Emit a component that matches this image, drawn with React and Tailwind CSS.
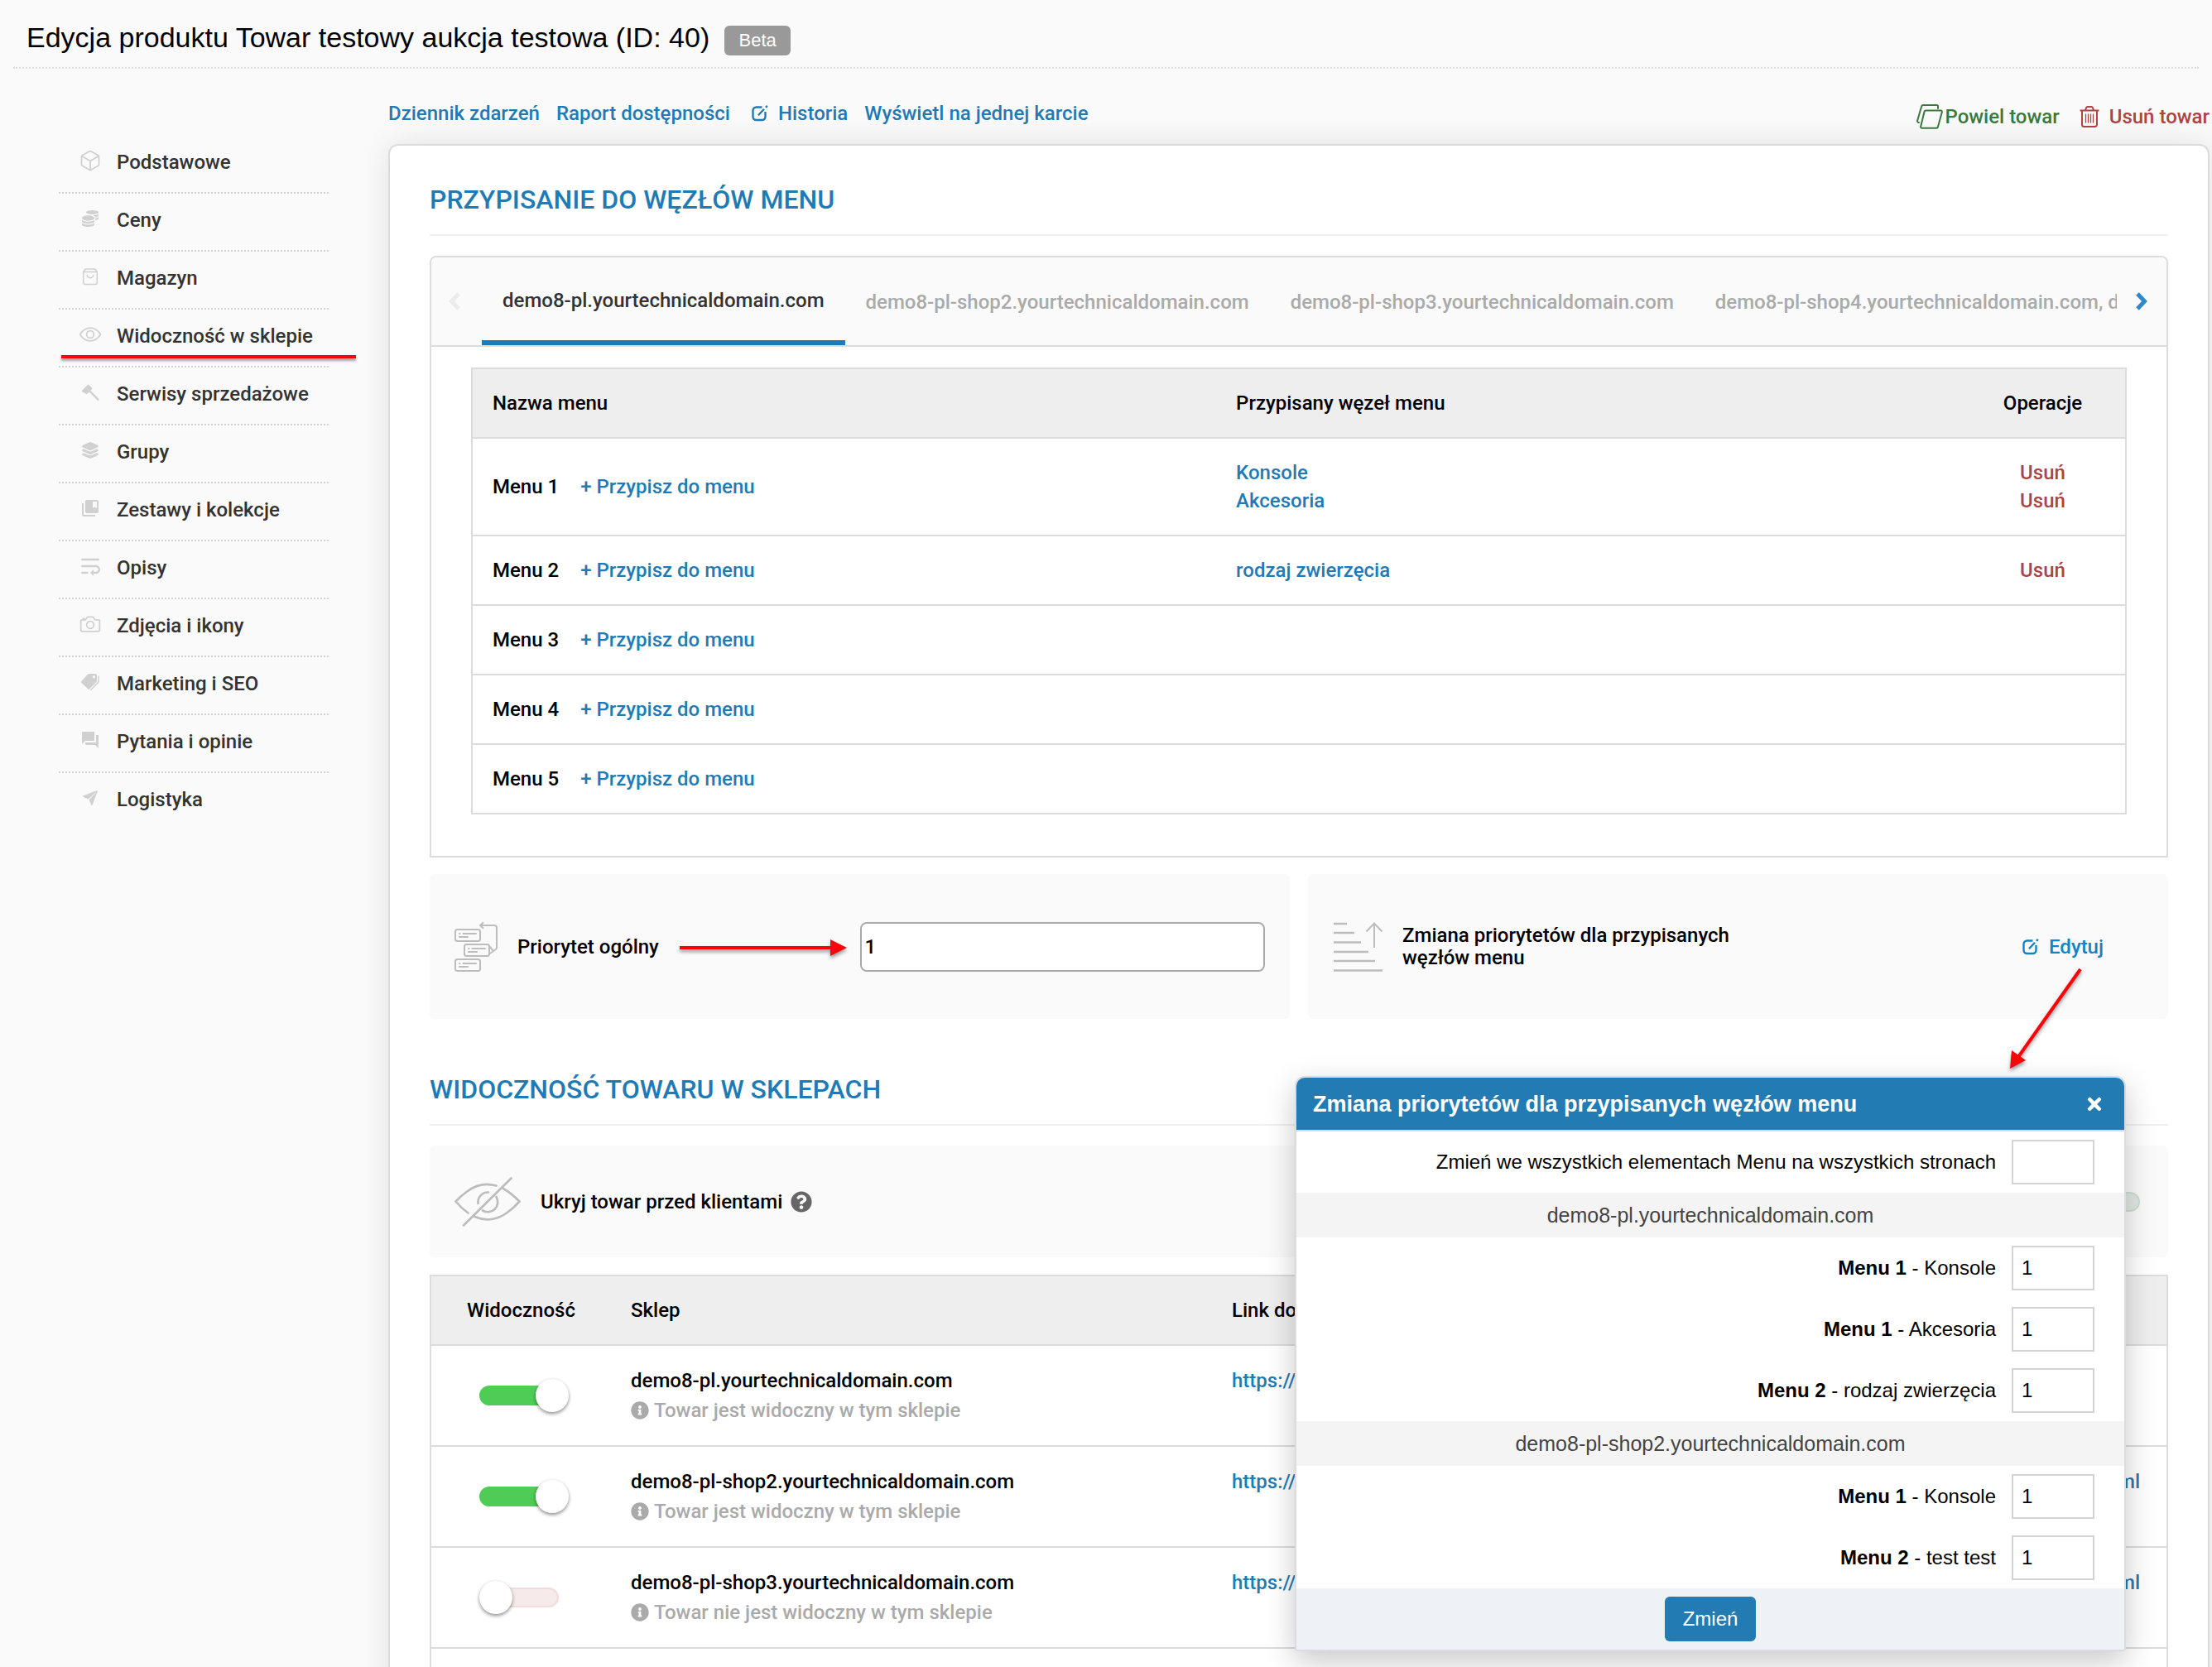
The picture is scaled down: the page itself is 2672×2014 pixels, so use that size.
// App.jsx
import React, { useState } from 'react';
import { FaCoins, FaInfoCircle, FaQuestionCircle, FaTimes } from 'react-icons/fa';
import { IoCubeOutline, IoEyeOutline, IoLayers, IoCameraOutline, IoPaperPlane } from 'react-icons/io5';
import { MdCollectionsBookmark, MdForum, MdWrapText } from 'react-icons/md';

// Icons that the packs do not have
const BagIcon = ({ className }) => (
  <svg viewBox="0 0 24 24" className={className} fill="none" stroke="currentColor" strokeWidth="1.5" strokeLinejoin="round" strokeLinecap="round">
    <path d="M3.7 6.5v13a2 2 0 0 0 2 2h12.6a2 2 0 0 0 2-2v-13L17.8 3H6.2L3.7 6.5zM3.7 6.5h16.6" />
    <path d="M8.2 10.5a3.8 3.2 0 0 0 7.6 0" />
  </svg>
);

const GavelIcon = ({ className }) => (
  <svg viewBox="0 0 24 24" className={className} fill="currentColor">
    <path d="M2.2 9.8 8.8 3a1.2 1.2 0 0 1 1.7 0l3.6 3.6a1 1 0 0 1 0 1.5l-1.7 1.6 9.8 10a1.2 1.2 0 0 1-1.7 1.8L10.6 11.5l-2.3 2.3a1 1 0 0 1-1.5 0L2.2 11.2a1 1 0 0 1 0-1.4z" />
  </svg>
);

const TagsIcon = ({ className }) => (
  <svg viewBox="-1 -2 24 24" className={className} fill="currentColor">
    <path
      fillRule="evenodd"
      d="M9.5 0H17a2 2 0 0 1 2 2v6.5a3 3 0 0 1-.8 1.8l-8 8a1.5 1.5 0 0 1-2.1 0L.5 11a1.5 1.5 0 0 1 0-2.1L7.800.7A3 3 0 0 1 9.500 0zM15.500 2a1.700 1.700 0 1 0 0 3.400 1.700 1.700 0 0 0 0-3.400z"
    />
    <path d="M21 3v6.200a2 2 0 0 1-.6 1.400l-8.600 8.700" fill="none" stroke="currentColor" strokeWidth="1.500" strokeLinecap="round" />
  </svg>
);

const EditIcon = ({ className }) => (
  <svg viewBox="0 0 20 20" className={className} fill="none" stroke="currentColor" strokeWidth="2.4">
    <path d="M12.5 2.5h-7a4 4 0 0 0-4 4V14a4 4 0 0 0 4 4h7a4 4 0 0 0 4-4V8" />
    <path d="m8 12.2 7-7.4M17 2.800 18.800.9" />
  </svg>
);

const CopyIcon = ({ className }) => (
  <svg viewBox="0 0 32 30" className={className} fill="none" stroke="currentColor" strokeWidth="2" strokeLinejoin="round" strokeLinecap="round">
    <path d="M26 5V3a1.500 1.500 0 0 0-1.500-2h-16A2.500 2.500 0 0 0 6 3L1.200 19.500A1.800 1.800 0 0 0 3 22" />
    <path d="M11.500 7.500h17.800a1.500 1.500 0 0 1 1.500 2L26 27a2 2 0 0 1-2 1.700H6.700a1.500 1.500 0 0 1-1.500-2L9.500 9a2 2 0 0 1 2-1.500z" />
  </svg>
);

const TrashIcon = ({ className }) => (
  <svg viewBox="0 0 24 26" className={className} fill="none" stroke="currentColor" strokeWidth="2">
    <path d="M.5 5.500h23M7 5l1-2.600A2 2 0 0 1 9.800 1h4.400A2 2 0 0 1 16 2.400L17 5" />
    <path d="M3 6v16.500A2.500 2.500 0 0 0 5.500 25h13a2.500 2.500 0 0 0 2.500-2.500V6" />
    <path d="M7.500 9.500v11M10.500 9.500v11M13.500 9.500v11M16.500 9.500v11" strokeWidth="1.3" />
  </svg>
);

const ChevronIcon = ({ className }) => (
  <svg viewBox="0 0 16 24" className={className} fill="none" stroke="currentColor" strokeWidth="5">
    <path d="m3 3 8.500 9L3 21" />
  </svg>
);

const PriorityIcon = ({ className }) => (
  <svg viewBox="0 0 52 60" className={className} fill="none" stroke="currentColor" strokeWidth="2" strokeLinecap="round">
    <rect x="1" y="9" width="30" height="14" rx="2.5" />
    <rect x="12" y="27" width="30" height="14" rx="2.5" />
    <rect x="1" y="45" width="30" height="14" rx="2.5" />
    <path d="M6 14h.5M10.500 14H26M6 18h10M17 32h.5M21.500 32H37M17 36h10M6 50h.5M10.500 50H26M6 54h10" />
    <path d="M31.500 4H48a3 3 0 0 1 3 3v23.500a3 3 0 0 1-1.200 2.500L42 38.500M34.500.8 31 4l3.500 3.300M42 29l5 6" />
  </svg>
);

const SortIcon = ({ className }) => (
  <svg viewBox="0 0 60 60" className={className} fill="none" stroke="currentColor" strokeWidth="2">
    <path d="M1 2h16M1 13h25M1 24.500h33M1 36h42M1 47h50M1 58.500h59" strokeWidth="2.5" />
    <path d="M50 31V1.500M40.500 11.500 50 1.500l9.500 10" />
  </svg>
);

const HiddenIcon = ({ className }) => (
  <svg viewBox="0 0 80 60" className={className} fill="none" stroke="currentColor" strokeWidth="2.7" strokeLinecap="round" strokeLinejoin="round">
    <path d="M11 58.500 68.500 1.500" />
    <path d="M50.500 10.500C36 6.500 25 10 14.500 18A89 89 0 0 0 1.500 29.500C6 35 11 39.500 16.500 43.500" />
    <path d="M59 14C66 18 73 24 78.500 29.500A85 85 0 0 1 63 43.500C52 51.500 38 54 24.500 48" />
    <path d="M41 18.500A12 12 0 0 0 28.500 32M50.500 24A12 12 0 0 1 34 40.500" />
  </svg>
);

const sections = [
  { name: 'Podstawowe', icon: IoCubeOutline, size: 'size-7' },
  { name: 'Ceny', icon: FaCoins, size: 'size-5' },
  { name: 'Magazyn', icon: BagIcon, size: 'size-6' },
  { name: 'Widoczność w sklepie', icon: IoEyeOutline, size: 'size-7', marked: true },
  { name: 'Serwisy sprzedażowe', icon: GavelIcon, size: 'size-6' },
  { name: 'Grupy', icon: IoLayers, size: 'size-6' },
  { name: 'Zestawy i kolekcje', icon: MdCollectionsBookmark, size: 'size-6' },
  { name: 'Opisy', icon: MdWrapText, size: 'size-8' },
  { name: 'Zdjęcia i ikony', icon: IoCameraOutline, size: 'size-7' },
  { name: 'Marketing i SEO', icon: TagsIcon, size: 'size-6' },
  { name: 'Pytania i opinie', icon: MdForum, size: 'size-6' },
  { name: 'Logistyka', icon: IoPaperPlane, size: 'size-5' }
];

const tabs = [
  'demo8-pl.yourtechnicaldomain.com',
  'demo8-pl-shop2.yourtechnicaldomain.com',
  'demo8-pl-shop3.yourtechnicaldomain.com',
  'demo8-pl-shop4.yourtechnicaldomain.com, demo8-pl-shop5.yourtechnicaldomain.com'
];

const menus = [
  { name: 'Menu 1', nodes: ['Konsole', 'Akcesoria'] },
  { name: 'Menu 2', nodes: ['rodzaj zwierzęcia'] },
  { name: 'Menu 3', nodes: [] },
  { name: 'Menu 4', nodes: [] },
  { name: 'Menu 5', nodes: [] }
];

const shops = [
  { domain: 'demo8-pl.yourtechnicaldomain.com', visible: true },
  { domain: 'demo8-pl-shop2.yourtechnicaldomain.com', visible: true },
  { domain: 'demo8-pl-shop3.yourtechnicaldomain.com', visible: false }
];

const priorityGroups = [
  {
    shop: 'demo8-pl.yourtechnicaldomain.com',
    rows: [['Menu 1', 'Konsole'], ['Menu 1', 'Akcesoria'], ['Menu 2', 'rodzaj zwierzęcia']]
  },
  {
    shop: 'demo8-pl-shop2.yourtechnicaldomain.com',
    rows: [['Menu 1', 'Konsole'], ['Menu 2', 'test test']]
  }
];

function SectionTitle({ children }) {
  return (
    <h2 className="border-b-2 border-[#f0f0f0] pb-6 text-[32px] leading-9 font-medium text-[#1f7bb6] uppercase">
      {children}
    </h2>
  );
}

function Switch({ label, checked, onChange, offClass = 'border-[#f0dcdc] bg-[#f6eaea]' }) {
  return (
    <input
      type="checkbox"
      role="switch"
      aria-label={label}
      checked={checked}
      onChange={onChange}
      className={`relative block h-6 w-24 appearance-none rounded-full border-2 before:absolute before:-top-[10px] before:size-10 before:rounded-full before:bg-white before:shadow-[0_2px_4px_rgba(0,0,0,0.45)] ${
        checked ? 'border-[#4fcc55] bg-[#4fcc55] before:left-[66px]' : `${offClass} before:-left-[2px]`
      }`}
    />
  );
}

function Sidebar() {
  return (
    <nav className="w-[469px] shrink-0 pt-[81px] pr-[72px] pl-[71px]">
      <ul>
        {sections.map(({ name, icon: Icon, size, marked }) => (
          <li key={name} className="relative border-b-2 border-dotted border-[#d2d2d2] last:border-0">
            <a href="#" className="flex h-[68px] items-center pb-1 pl-[26px] font-medium text-[#333]">
              <span className="mr-5 -mt-1 flex w-6 justify-center text-[#d0d0d0]">
                <Icon className={`shrink-0 ${size}`} />
              </span>
              {name}
            </a>
            {marked && (
              <span className="absolute top-[55px] left-[3px] h-1 w-[356px] bg-[#ff0008] shadow-[0_3px_3px_rgba(0,0,0,0.35)]" />
            )}
          </li>
        ))}
      </ul>
    </nav>
  );
}

function MenuNodes() {
  const [active, setActive] = useState(0);

  return (
    <div className="mt-6 rounded-t-lg border-2 border-[#dcdcdc]">
      <div className="flex h-[108px] items-stretch rounded-t-md border-b-2 border-[#dcdcdc] bg-[#fafafa]">
        <button aria-label="Poprzednie" className="flex w-[61px] shrink-0 items-center pl-5 text-[#ececec]">
          <ChevronIcon className="h-6 w-4 rotate-180" />
        </button>
        <div role="tablist" className="flex min-w-0 flex-1 overflow-hidden">
          {tabs.map((tab, i) => (
            <button
              key={tab}
              role="tab"
              aria-selected={i === active}
              onClick={() => setActive(i)}
              className={`shrink-0 border-b-[6px] px-[25px] font-medium whitespace-nowrap ${
                i === active ? 'border-[#1f7bb6] pt-1 text-[#333]' : 'border-transparent pt-2 text-[#aaa]'
              }`}
            >
              {tab}
            </button>
          ))}
        </div>
        <button aria-label="Następne" className="flex w-[60px] shrink-0 items-center justify-center text-[#2f88c8]">
          <ChevronIcon className="h-6 w-4" />
        </button>
      </div>

      <div className="px-12 pt-[25px] pb-[50px]">
        <table className="w-full table-fixed border-2 border-[#dcdcdc] font-medium">
          <thead>
            <tr className="h-[84px] bg-[#eee] text-left">
              <th className="w-[45%] pl-6 font-medium">Nazwa menu</th>
              <th className="pl-6 font-medium">Przypisany węzeł menu</th>
              <th className="w-[200px] text-center font-medium">Operacje</th>
            </tr>
          </thead>
          <tbody>
            {menus.map(menu => (
              <tr key={menu.name} className="h-[84px] border-t-2 border-[#dcdcdc]">
                <td className="pl-6">
                  {menu.name}
                  <a href="#" className="ml-[26px] text-[#1f7bb6]">+ Przypisz do menu</a>
                </td>
                <td className={menu.nodes.length > 1 ? 'py-6 pl-6' : 'pl-6'}>
                  {menu.nodes.map(node => (
                    <a key={node} href="#" className="block leading-[34px] text-[#1f7bb6]">{node}</a>
                  ))}
                </td>
                <td className="text-center">
                  {menu.nodes.map(node => (
                    <a key={node} href="#" className="block leading-[34px] text-[#ad4444]">Usuń</a>
                  ))}
                </td>
              </tr>
            ))}
          </tbody>
        </table>
      </div>
    </div>
  );
}

function PriorityPanels() {
  return (
    <div className="mt-5 grid grid-cols-2 gap-[22px] font-medium">
      <div className="grid h-[175px] grid-cols-2 items-center rounded-md bg-[#fafafa]">
        <div className="flex items-center pr-4 pl-[30px]">
          <PriorityIcon className="h-[60px] w-[52px] shrink-0 text-[#bdbdbd]" />
          <label htmlFor="priority" className="ml-6">Priorytet ogólny</label>
          <svg viewBox="0 0 202 24" className="ml-auto h-6 w-[202px] drop-shadow-[0_3px_2px_rgba(0,0,0,0.4)]" fill="#ff0008">
            <path d="M0 11h182V3l20 10-20 10v-8H0z" />
          </svg>
        </div>
        <div className="pr-[30px]">
          <input
            id="priority"
            defaultValue="1"
            className="block h-[60px] w-full rounded-lg border-2 border-[#aaa] bg-white px-1 font-medium"
          />
        </div>
      </div>

      <div className="relative flex h-[175px] items-center rounded-md bg-[#fafafa] pr-[78px] pl-[30px]">
        <SortIcon className="size-[60px] shrink-0 text-[#bdbdbd]" />
        <p className="ml-6 w-[420px] leading-[27px]">Zmiana priorytetów dla przypisanych węzłów menu</p>
        <a href="#" className="ml-auto flex items-center gap-3 text-[#1283c4]">
          <EditIcon className="size-5" />
          Edytuj
        </a>
        {/* Pointer from the edit link to the dialog */}
        <svg viewBox="0 0 90 126" className="absolute top-28 right-[103px] z-20 h-[126px] w-[90px] drop-shadow-[0_3px_2px_rgba(0,0,0,0.4)]">
          <path d="M87 3 12 109" stroke="#ff0008" strokeWidth="4" />
          <path d="M2 123 4 101 21 113z" fill="#ff0008" />
        </svg>
      </div>
    </div>
  );
}

function ShopVisibility() {
  const [hidden, setHidden] = useState(false);
  const [visible, setVisible] = useState(shops.map(shop => shop.visible));

  const toggleShop = (index) => {
    setVisible(prev => prev.map((value, i) => (i === index ? !value : value)));
  };

  return (
    <>
      <div className="mt-6 flex h-[135px] items-center rounded-md bg-[#fafafa] pr-[34px] pl-[30px] font-medium">
        <HiddenIcon className="h-[60px] w-20 text-[#bdbdbd]" />
        <span className="ml-6">Ukryj towar przed klientami</span>
        <FaQuestionCircle className="ml-[10px] size-[26px] text-[#666]" />
        <div className="ml-auto">
          <Switch
            label="Ukryj towar przed klientami"
            checked={hidden}
            onChange={() => setHidden(!hidden)}
            offClass="border-[#d0ddd2] bg-[#e0e7e2]"
          />
        </div>
      </div>

      <table className="mt-[21px] w-full table-fixed border-2 border-[#dcdcdc] font-medium">
        <thead>
          <tr className="h-[84px] bg-[#eee] text-left">
            <th className="w-[218px] text-center font-medium">Widoczność</th>
            <th className="w-[726px] pl-6 font-medium">Sklep</th>
            <th className="pl-6 font-medium">Link do karty towaru</th>
          </tr>
        </thead>
        <tbody>
          {shops.map((shop, i) => (
            <tr key={shop.domain} className="h-[122px] border-y-2 border-[#dcdcdc]">
              <td className="pl-[58px]">
                <Switch label={shop.domain} checked={visible[i]} onChange={() => toggleShop(i)} />
              </td>
              <td className="pl-6">
                <p className="leading-9">{shop.domain}</p>
                <p className="flex items-center gap-[6px] leading-9 text-[#aaa]">
                  <FaInfoCircle className="size-[22px]" />
                  {visible[i] ? 'Towar jest widoczny w tym sklepie' : 'Towar nie jest widoczny w tym sklepie'}
                </p>
              </td>
              <td className="pt-6 pl-6 align-top">
                <a href="#" className="block leading-9 whitespace-nowrap text-[#1f7bb6]">
                  https://{shop.domain}/product-pol-40-towar-testowy-aukcja-testowa.html
                </a>
              </td>
            </tr>
          ))}
          <tr className="h-[122px]">
            <td colSpan={3} />
          </tr>
        </tbody>
      </table>
    </>
  );
}

function PriorityField({ id, value, children }) {
  return (
    <div className="flex h-[74px] items-center justify-end gap-[19px] pr-9">
      <label htmlFor={id}>{children}</label>
      <input id={id} defaultValue={value} className="h-[54px] w-[100px] border-2 border-[#d4d4d4] bg-white px-[10px]" />
    </div>
  );
}

function PriorityDialog() {
  const [isOpen, setIsOpen] = useState(true);

  if (!isOpen) return null;

  return (
    <div
      role="dialog"
      aria-labelledby="dialog-title"
      className="absolute top-[1124px] right-[99px] z-10 w-[1004px] overflow-hidden rounded-t-xl rounded-b border-2 border-[#dcdce0] bg-white font-['Liberation_Sans',Arial,sans-serif] shadow-[0_12px_36px_rgba(0,0,0,0.22)]"
    >
      <div className="flex h-[65px] items-center justify-between border-b-2 border-[#dcdce0] bg-[#227bb3] pr-6 pl-5 text-white">
        <h3 id="dialog-title" className="text-[27px] font-bold">Zmiana priorytetów dla przypisanych węzłów menu</h3>
        <button aria-label="Zamknij" onClick={() => setIsOpen(false)}>
          <FaTimes className="size-6" />
        </button>
      </div>

      <PriorityField id="priority-all" value="">Zmień we wszystkich elementach Menu na wszystkich stronach</PriorityField>
      {priorityGroups.map(group => (
        <div key={group.shop}>
          <div className="flex h-[54px] items-center justify-center bg-[#f4f4f4] text-[25px] text-[#444]">{group.shop}</div>
          {group.rows.map(([menu, node]) => (
            <PriorityField key={menu + node} id={`${group.shop}-${menu}-${node}`} value="1">
              <b>{menu}</b> - {node}
            </PriorityField>
          ))}
        </div>
      ))}

      <div className="flex h-[74px] items-center justify-center bg-[#eef1f6]">
        <button className="h-[54px] w-[110px] rounded-md bg-[#227bb3] text-white">Zmień</button>
      </div>
    </div>
  );
}

export default function App() {
  return (
    <div className="h-screen overflow-hidden bg-[#fafafa] font-[Roboto,sans-serif] text-[24px] leading-8 text-black">
      <header className="mx-4 flex h-[83px] items-center border-b-2 border-dotted border-[#dcdcdc] px-4 pt-2 font-['Liberation_Sans',Arial,sans-serif]">
        <h1 className="text-[34px]">Edycja produktu Towar testowy aukcja testowa (ID: 40)</h1>
        <span className="mt-2 ml-[18px] flex h-9 w-20 items-center justify-center rounded-md bg-[#999] text-[22px] text-white">Beta</span>
      </header>

      <div className="flex">
        <Sidebar />

        <main className="min-w-0 flex-1 pr-[3px]">
          <div className="flex h-[91px] items-center gap-5 pt-4 font-medium text-[#1f7bb6]">
            <a href="#">Dziennik zdarzeń</a>
            <a href="#">Raport dostępności</a>
            <a href="#" className="ml-[6px] flex items-center gap-3">
              <EditIcon className="size-5" />
              Historia
            </a>
            <a href="#">Wyświetl na jednej karcie</a>
            <a href="#" className="mt-2 ml-auto flex items-center gap-[2px] text-[#3a7a3f]">
              <CopyIcon className="h-[30px] w-8" />
              Powiel towar
            </a>
            <a href="#" className="mt-2 ml-1 flex items-center gap-3 text-[#ad4444]">
              <TrashIcon className="h-[26px] w-6" />
              Usuń towar
            </a>
          </div>

          <div className="relative rounded-xl border-2 border-[#dcdcdc] bg-white px-12 pt-[47px] shadow-[0_0_36px_rgba(0,0,0,0.1)]">
            <SectionTitle>Przypisanie do węzłów menu</SectionTitle>
            <MenuNodes />
            <PriorityPanels />
            <div className="mt-[67px]">
              <SectionTitle>Widoczność towaru w sklepach</SectionTitle>
            </div>
            <ShopVisibility />
            <PriorityDialog />
          </div>
        </main>
      </div>
    </div>
  );
}
